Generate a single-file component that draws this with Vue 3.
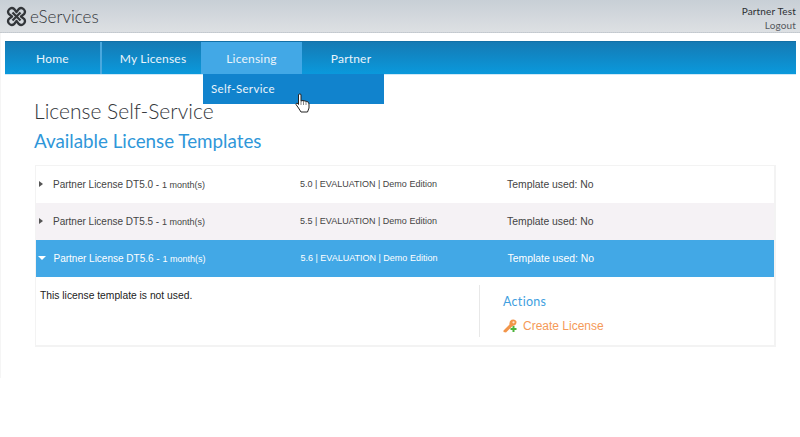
<script setup>
const navItems = [
  { label: 'Home', w: 97, sep: true },
  { label: 'My Licenses', w: 99, nudge: true },
  { label: 'Licensing', w: 101, active: true },
  { label: 'Partner', w: 98 }
]
const rows = [
  { name: 'Partner License DT5.0', info: '5.0 | EVALUATION | Demo Edition' },
  { name: 'Partner License DT5.5', info: '5.5 | EVALUATION | Demo Edition', alt: true },
  { name: 'Partner License DT5.6', info: '5.6 | EVALUATION | Demo Edition', open: true }
]
</script>

<template>
  <div class="page">
    <header class="top">
      <div class="brand">
        <svg class="logo" width="21" height="21" viewBox="0 0 21 21" fill="none" stroke="#33363a" stroke-width="2.300" stroke-linejoin="round">
          <path d="M10.500 6 L8.200 3 A3.700 3.700 0 0 0 3 8.200 L6 10.500 L3 12.800 A3.700 3.700 0 0 0 8.200 18 L10.500 15 L12.800 18 A3.700 3.700 0 0 0 18 12.800 L15 10.500 L18 8.200 A3.700 3.700 0 0 0 12.800 3 Z" />
          <path d="M6.500 6.500 L14.500 14.500 M14.500 6.500 L6.500 14.500" />
        </svg>
        <span class="brand-name">eServices</span>
      </div>
      <div class="user">
        <div class="user-name">Partner Test</div>
        <div class="logout">Logout</div>
      </div>
    </header>

    <div class="frame">
      <nav class="nav">
        <div
          v-for="item in navItems"
          :key="item.label"
          class="nav-item"
          :class="{ active: item.active, sep: item.sep, nudge: item.nudge }"
          :style="{ width: item.w + 'px' }"
        >
          {{ item.label }}
          <div v-if="item.active" class="menu">
            <span>Self-Service</span>
            <svg class="cursor" width="16" height="20" viewBox="0 0 16 20">
              <path d="M3.500 1.500 Q5 .3 6 1.500 L6 8 L8 7.500 L10 8 L12 8.500 Q14 9 14 11 L14 15 L12.500 19 L6 19 L3.500 15 L1 11.500 Q1 9.500 3 10.500 L3.500 11.500 Z" fill="#fff" stroke="#222" stroke-width="1" />
              <path d="M6 8 V12 M8.500 8 V12 M11 8.500 V12" stroke="#666" stroke-width=".8" />
            </svg>
          </div>
        </div>
      </nav>

      <main class="content">
        <h1>License Self-Service</h1>
        <h2>Available License Templates</h2>

        <section class="table">
          <div
            v-for="row in rows"
            :key="row.name"
            class="row"
            :class="{ alt: row.alt, open: row.open }"
          >
            <span class="arrow"></span>
            <span class="name">{{ row.name }} - <small>1 month(s)</small></span>
            <span class="info">{{ row.info }}</span>
            <span class="used">Template used: No</span>
          </div>
          <div class="detail">
            <p class="detail-text">This license template is not used.</p>
            <aside class="actions">
              <h3>Actions</h3>
              <div class="create">
                <svg width="15" height="14" viewBox="0 0 15 14">
                  <path d="M.500 11.500 L6.500 5.500 Q6 2 8.500 .8 Q12 -.300 13.500 2.500 Q13.800 6.500 9.500 7 L3 13.500 L.500 13 Z" fill="#f2954a" />
                  <circle cx="10.500" cy="3.300" r="1.100" fill="#fde6d0" />
                  <path d="M10.500 7 V13 M7.500 10 H13.500" stroke="#4cb43c" stroke-width="2" />
                </svg>
                <span>Create License</span>
              </div>
            </aside>
          </div>
        </section>
      </main>
    </div>
  </div>
</template>

<style>
html, body { margin: 0; background: #fff; }
</style>

<style scoped>
.page {
  width: 800px;
  height: 437px;
  overflow: hidden;
  background: #fff;
  font-family: "Liberation Sans", Arial, sans-serif;
}
.top {
  height: 32px;
  display: flex;
  justify-content: space-between;
  background: linear-gradient(#c8cfd6, #dde0e3);
  border-bottom: 1px dotted #c4c8cc;
}
.brand {
  display: flex;
  align-items: center;
  padding-left: 6px;
  gap: 3px;
}
.brand-name {
  font-family: Lato, sans-serif;
  font-weight: 300;
  font-size: 17px;
  color: #33363a;
}
.user {
  padding: 4px 4px 0 0;
  text-align: right;
  font-family: Lato, sans-serif;
  font-size: 10px;
  line-height: 14px;
  letter-spacing: .15px;
}
.user-name { color: #2c2f33; }
.logout { color: #55595e; }
.frame {
  box-sizing: border-box;
  height: 345px;
  padding-top: 8px;
  border-left: 1px solid #f5f5f5;
}
.nav {
  display: flex;
  box-sizing: border-box;
  width: 791px;
  height: 34px;
  margin-left: 4px;
  background: linear-gradient(#157ab4, #0a99dc);
  border-top: 1px solid #126fa6;
  border-bottom: 1px solid #cfe8f7;
}
.nav-item {
  position: relative;
  box-sizing: border-box;
  display: flex;
  align-items: center;
  justify-content: center;
  color: #eaf4fb;
  font-family: Lato, sans-serif;
  font-size: 12px;
  letter-spacing: .2px;
}
.nav-item.sep { border-right: 2px solid #4aa8de; }
.nav-item.nudge { padding-left: 3px; }
.nav-item.active { background: #42a8e6; }
.menu {
  position: absolute;
  top: 32px;
  left: 2px;
  width: 181px;
  height: 30px;
  box-sizing: border-box;
  padding: 0 0 2px 8px;
  display: flex;
  align-items: center;
  background: #1183cd;
  color: #eaf4fb;
  font-size: 11.500px;
  letter-spacing: .35px;
  z-index: 2;
}
.cursor {
  position: absolute;
  left: 92px;
  top: 19px;
}
.content { padding: 24px 25px 0 33px; }
h1 {
  margin: 0;
  font-family: Lato, sans-serif;
  font-weight: 300;
  font-size: 21px;
  line-height: 24px;
  color: #33363a;
}
h2 {
  margin: 6px 0 0;
  font-family: Lato, sans-serif;
  font-weight: 400;
  font-size: 18.800px;
  line-height: 24px;
  color: #2f97d9;
}
.table {
  box-sizing: border-box;
  width: 741px;
  margin: 12px 0 0 1px;
  border: 1px solid #f3f3f3;
  border-right-width: 2px;
  border-bottom-width: 2px;
}
.row {
  box-sizing: border-box;
  height: 37px;
  padding-bottom: 1px;
  display: flex;
  align-items: center;
  color: #444;
  font-size: 10px;
}
.row.alt { background: #f5f2f5; }
.row.open { background: #42a8e6; color: #fff; }
.arrow {
  width: 0;
  height: 0;
  margin-left: 3px;
  margin-right: 10px;
  border-top: 3.500px solid transparent;
  border-bottom: 3.500px solid transparent;
  border-left: 4.500px solid #555;
}
.row.open .arrow {
  margin-left: 2px;
  margin-right: 7.500px;
  border-left: 4px solid transparent;
  border-right: 4px solid transparent;
  border-top: 4px solid #fff;
  border-bottom: 0;
}
.name { width: 247px; }
small { font-size: 9px; }
.info { width: 207px; font-size: 9px; }
.used { font-size: 10.400px; }
.detail {
  height: 68px;
  display: flex;
  box-sizing: border-box;
  padding-top: 8px;
}
.detail-text {
  width: 439px;
  margin: 4px 0 0 4px;
  font-size: 10.300px;
  line-height: 14px;
  color: #222;
}
.actions {
  box-sizing: border-box;
  height: 52px;
  padding: 9px 0 0 23px;
  border-left: 1px solid #e8e8e8;
}
h3 {
  margin: 0;
  font-family: Lato, sans-serif;
  font-weight: 400;
  font-size: 12.500px;
  line-height: 16px;
  letter-spacing: .3px;
  color: #3f9fe0;
}
.create {
  display: flex;
  align-items: center;
  gap: 5px;
  margin-top: 9px;
  color: #f59a58;
  font-size: 12px;
}
</style>
